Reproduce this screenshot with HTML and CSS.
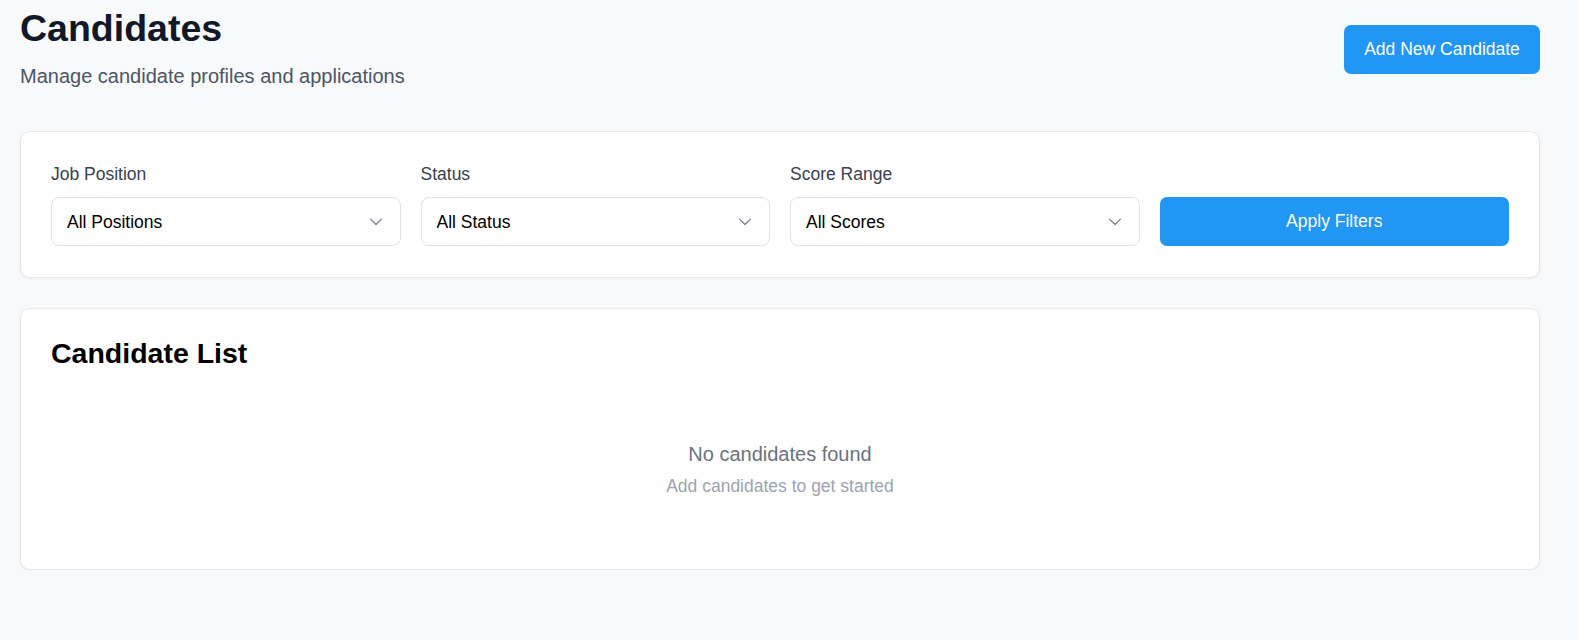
FILE: index.html
```html
<!DOCTYPE html>
<html lang="en">
<head>
<meta charset="utf-8">
<title>Candidates</title>
<link rel="stylesheet" href="styles.css">
</head>
<body>
<main class="page">
  <header class="page-header">
    <div class="page-heading">
      <h1 class="page-title">Candidates</h1>
      <p class="page-subtitle">Manage candidate profiles and applications</p>
    </div>
    <button class="btn btn-primary btn-add" type="button">Add New Candidate</button>
  </header>

  <section class="card filters">
    <div class="filter-field">
      <label class="filter-label" for="f-job">Job Position</label>
      <div class="select-wrap">
        <select id="f-job" class="select"><option>All Positions</option></select>
        <svg class="select-chevron" width="14" height="8" viewBox="0 0 14 8" aria-hidden="true"><path d="M1.5 1.2l5.5 5.3 5.5-5.3" fill="none" stroke="#737a86" stroke-width="1.1" stroke-linecap="round" stroke-linejoin="round"/></svg>
      </div>
    </div>
    <div class="filter-field">
      <label class="filter-label" for="f-status">Status</label>
      <div class="select-wrap">
        <select id="f-status" class="select"><option>All Status</option></select>
        <svg class="select-chevron" width="14" height="8" viewBox="0 0 14 8" aria-hidden="true"><path d="M1.5 1.2l5.5 5.3 5.5-5.3" fill="none" stroke="#737a86" stroke-width="1.1" stroke-linecap="round" stroke-linejoin="round"/></svg>
      </div>
    </div>
    <div class="filter-field">
      <label class="filter-label" for="f-score">Score Range</label>
      <div class="select-wrap">
        <select id="f-score" class="select"><option>All Scores</option></select>
        <svg class="select-chevron" width="14" height="8" viewBox="0 0 14 8" aria-hidden="true"><path d="M1.5 1.2l5.5 5.3 5.5-5.3" fill="none" stroke="#737a86" stroke-width="1.1" stroke-linecap="round" stroke-linejoin="round"/></svg>
      </div>
    </div>
    <div class="filter-field filter-action">
      <button class="btn btn-primary btn-apply" type="button">Apply Filters</button>
    </div>
  </section>

  <section class="card list-card">
    <h2 class="list-title">Candidate List</h2>
    <div class="empty-state">
      <p class="empty-title">No candidates found</p>
      <p class="empty-sub">Add candidates to get started</p>
    </div>
  </section>
</main>
</body>
</html>
```

FILE: styles.css
```css
* { box-sizing: border-box; }

html, body {
  margin: 0;
  padding: 0;
  background: #f8f9fb;
}

body {
  font-family: "Liberation Sans", Arial, sans-serif;
  color: #111827;
  font-size: 17.5px;
}

.page {
  width: 1520px;
  margin-left: 20px;
  padding-top: 8px;
}

.page-header {
  display: flex;
  justify-content: space-between;
  align-items: center;
}

.page-title {
  margin: 0;
  font-size: 37.5px;
  line-height: 40px;
  font-weight: 700;
  color: #111827;
}

.page-subtitle {
  margin: 14px 0 0;
  font-size: 20px;
  line-height: 28px;
  color: #4b5563;
}

.btn {
  font-family: inherit;
  border: none;
  cursor: pointer;
}

.btn-primary {
  background: #2196f3;
  color: #ffffff;
  border-radius: 7px;
}

.btn-add {
  width: 196px;
  height: 49px;
  font-size: 17.5px;
  margin-top: 1px;
}

.card {
  background: #ffffff;
  border: 1px solid #e5e7eb;
  border-radius: 10px;
  box-shadow: 0 1px 3px rgba(0, 0, 0, 0.05);
}

.filters {
  margin-top: 41px;
  padding: 30px 30px 31px;
  display: grid;
  grid-template-columns: repeat(4, 1fr);
  column-gap: 20px;
}

.filter-field {
  display: flex;
  flex-direction: column;
}

.filter-action {
  justify-content: flex-end;
}

.filter-label {
  font-size: 17.5px;
  line-height: 24px;
  color: #374151;
  margin-bottom: 11px;
}

.select-wrap {
  position: relative;
}

.select {
  appearance: none;
  -webkit-appearance: none;
  width: 100%;
  height: 49px;
  padding: 0 40px 0 15px;
  font-family: inherit;
  font-size: 17.5px;
  color: #000000;
  background: #ffffff;
  border: 1px solid #e0e2e6;
  border-radius: 8px;
}

.select-chevron {
  position: absolute;
  right: 18px;
  top: 21px;
  pointer-events: none;
}

.btn-apply {
  width: 100%;
  height: 49px;
  font-size: 17.5px;
}

.list-card {
  margin-top: 30px;
  padding: 28px 30px 31px;
}

.list-title {
  margin: 0;
  font-size: 28.5px;
  line-height: 32px;
  font-weight: 700;
  color: #000000;
}

.empty-state {
  text-align: center;
  padding: 71px 0 40px;
}

.empty-title {
  margin: 0;
  font-size: 20px;
  line-height: 28px;
  color: #6b7280;
}

.empty-sub {
  margin: 6px 0 0;
  font-size: 17.5px;
  line-height: 24px;
  color: #9ca3af;
}
```
